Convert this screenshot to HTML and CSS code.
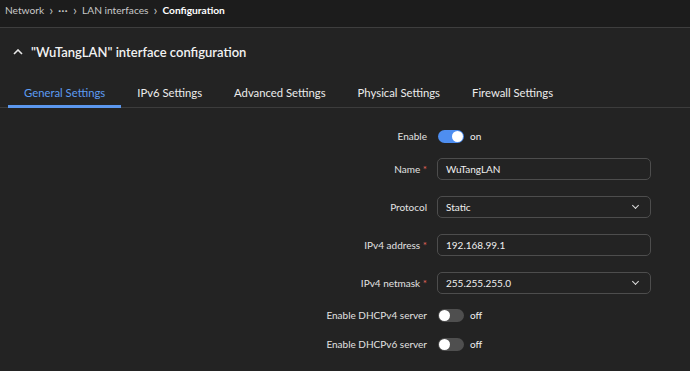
FILE: index.html
```html
<!DOCTYPE html>
<html lang="en">
<head>
  <meta charset="UTF-8">
  <title>Interface configuration</title>
  <link rel="stylesheet" href="styles.css">
</head>
<body>
  <nav class="breadcrumb">
    <span class="crumb">Network</span>
    <span class="sep">&#8250;</span>
    <span class="crumb dots">&middot;&middot;&middot;</span>
    <span class="sep">&#8250;</span>
    <span class="crumb">LAN interfaces</span>
    <span class="sep">&#8250;</span>
    <span class="crumb current">Configuration</span>
  </nav>

  <section class="panel">
    <h2 class="panel-title">
      <svg class="collapse-icon" width="10" height="6" viewBox="0 0 10 6"><path d="M1 5 L5 1 L9 5" fill="none" stroke="#e8e8e8" stroke-width="1.6"/></svg>
      "WuTangLAN" interface configuration
    </h2>

    <div class="tabs">
      <span class="tab active">General Settings</span>
      <span class="tab">IPv6 Settings</span>
      <span class="tab">Advanced Settings</span>
      <span class="tab">Physical Settings</span>
      <span class="tab">Firewall Settings</span>
    </div>

    <form class="form">
      <div class="row row-enable">
        <label>Enable</label>
        <div class="toggle-wrap"><span class="toggle on"></span><span class="toggle-text">on</span></div>
      </div>
      <div class="row row-input">
        <label>Name <span class="req">*</span></label>
        <div class="field">WuTangLAN</div>
      </div>
      <div class="row row-input">
        <label>Protocol</label>
        <div class="field select">Static<span class="caret"></span></div>
      </div>
      <div class="row row-input">
        <label>IPv4 address <span class="req">*</span></label>
        <div class="field">192.168.99.1</div>
      </div>
      <div class="row row-input row-last-input">
        <label>IPv4 netmask <span class="req">*</span></label>
        <div class="field select">255.255.255.0<span class="caret"></span></div>
      </div>
      <div class="row row-dhcp4">
        <label>Enable DHCPv4 server</label>
        <div class="toggle-wrap"><span class="toggle"></span><span class="toggle-text">off</span></div>
      </div>
      <div class="row row-dhcp6">
        <label>Enable DHCPv6 server</label>
        <div class="toggle-wrap"><span class="toggle"></span><span class="toggle-text">off</span></div>
      </div>
    </form>
  </section>
</body>
</html>
```

FILE: styles.css
```css
body {
  font-family: Lato, "Noto Sans", sans-serif;
  margin: 0;
  padding: 0;
  background-color: #232323;
  color: #e6e6e6;
  font-size: 10px;
  height: 371px;
  overflow: hidden;
}
.breadcrumb {
  display: flex;
  align-items: center;
  background-color: #1c1c1c;
  border-bottom: 1px solid #3e3e3e;
  box-sizing: border-box;
  height: 28px;
  padding: 0 5px 8px 5px;
  color: #c8c8c8;
  font-size: 10.2px;
}
.sep {
  margin: 0 5px;
  font-size: 14px;
  line-height: 11px;
  color: #bdbdbd;
}
.dots {
  font-weight: bold;
  letter-spacing: 0.5px;
}
.current {
  color: #fff;
  font-weight: 700;
}
.panel-title {
  display: flex;
  align-items: center;
  margin: 0;
  padding: 9px 0 0 13px;
  height: 30px;
  font-size: 13px;
  font-weight: 600;
  color: #f2f2f2;
}
.collapse-icon {
  margin-right: 8px;
}
.tabs {
  display: flex;
  margin-top: 19px;
  padding-left: 8px;
  border-bottom: 1px solid #3c3c3c;
}
.tab {
  padding: 0 16px 6px 16px;
  border-bottom: 3px solid transparent;
  margin-bottom: -1px;
  color: #ececec;
  font-size: 11.3px;
}
.tab.active {
  color: #5d9cf2;
  border-bottom-color: #5b97ee;
}
.form {
  padding: 0 39px 0 0;
}
.row {
  display: grid;
  grid-template-columns: 1fr 214px;
  column-gap: 10px;
  align-items: center;
  height: 22px;
}
.row label {
  text-align: right;
  color: #e2e2e2;
}
.req {
  color: #e2655a;
}
.row-enable {
  margin-top: 17px;
  margin-bottom: 11px;
}
.row-input {
  margin-bottom: 16px;
}
.row-input.row-last-input {
  margin-bottom: 10px;
}
.row-dhcp4 {
  margin-bottom: 7px;
}
.field {
  position: relative;
  height: 22px;
  box-sizing: border-box;
  border: 1px solid #4d4d4d;
  border-radius: 5px;
  padding: 0 8px;
  line-height: 20px;
  color: #f0f0f0;
}
.caret {
  position: absolute;
  right: 12px;
  top: 6px;
  width: 4px;
  height: 4px;
  border-right: 1.5px solid #ddd;
  border-bottom: 1.5px solid #ddd;
  transform: rotate(45deg);
}
.toggle-wrap {
  display: flex;
  align-items: center;
}
.toggle {
  position: relative;
  width: 26px;
  height: 13px;
  border-radius: 7px;
  background-color: #4f4f4f;
  margin-left: 1px;
}
.toggle::after {
  content: "";
  position: absolute;
  top: 1px;
  left: 1px;
  width: 11px;
  height: 11px;
  border-radius: 50%;
  background-color: #fff;
}
.toggle.on {
  background-color: #4e8ef0;
}
.toggle.on::after {
  left: 14px;
}
.toggle-text {
  margin-left: 6px;
  color: #f0f0f0;
}
```
